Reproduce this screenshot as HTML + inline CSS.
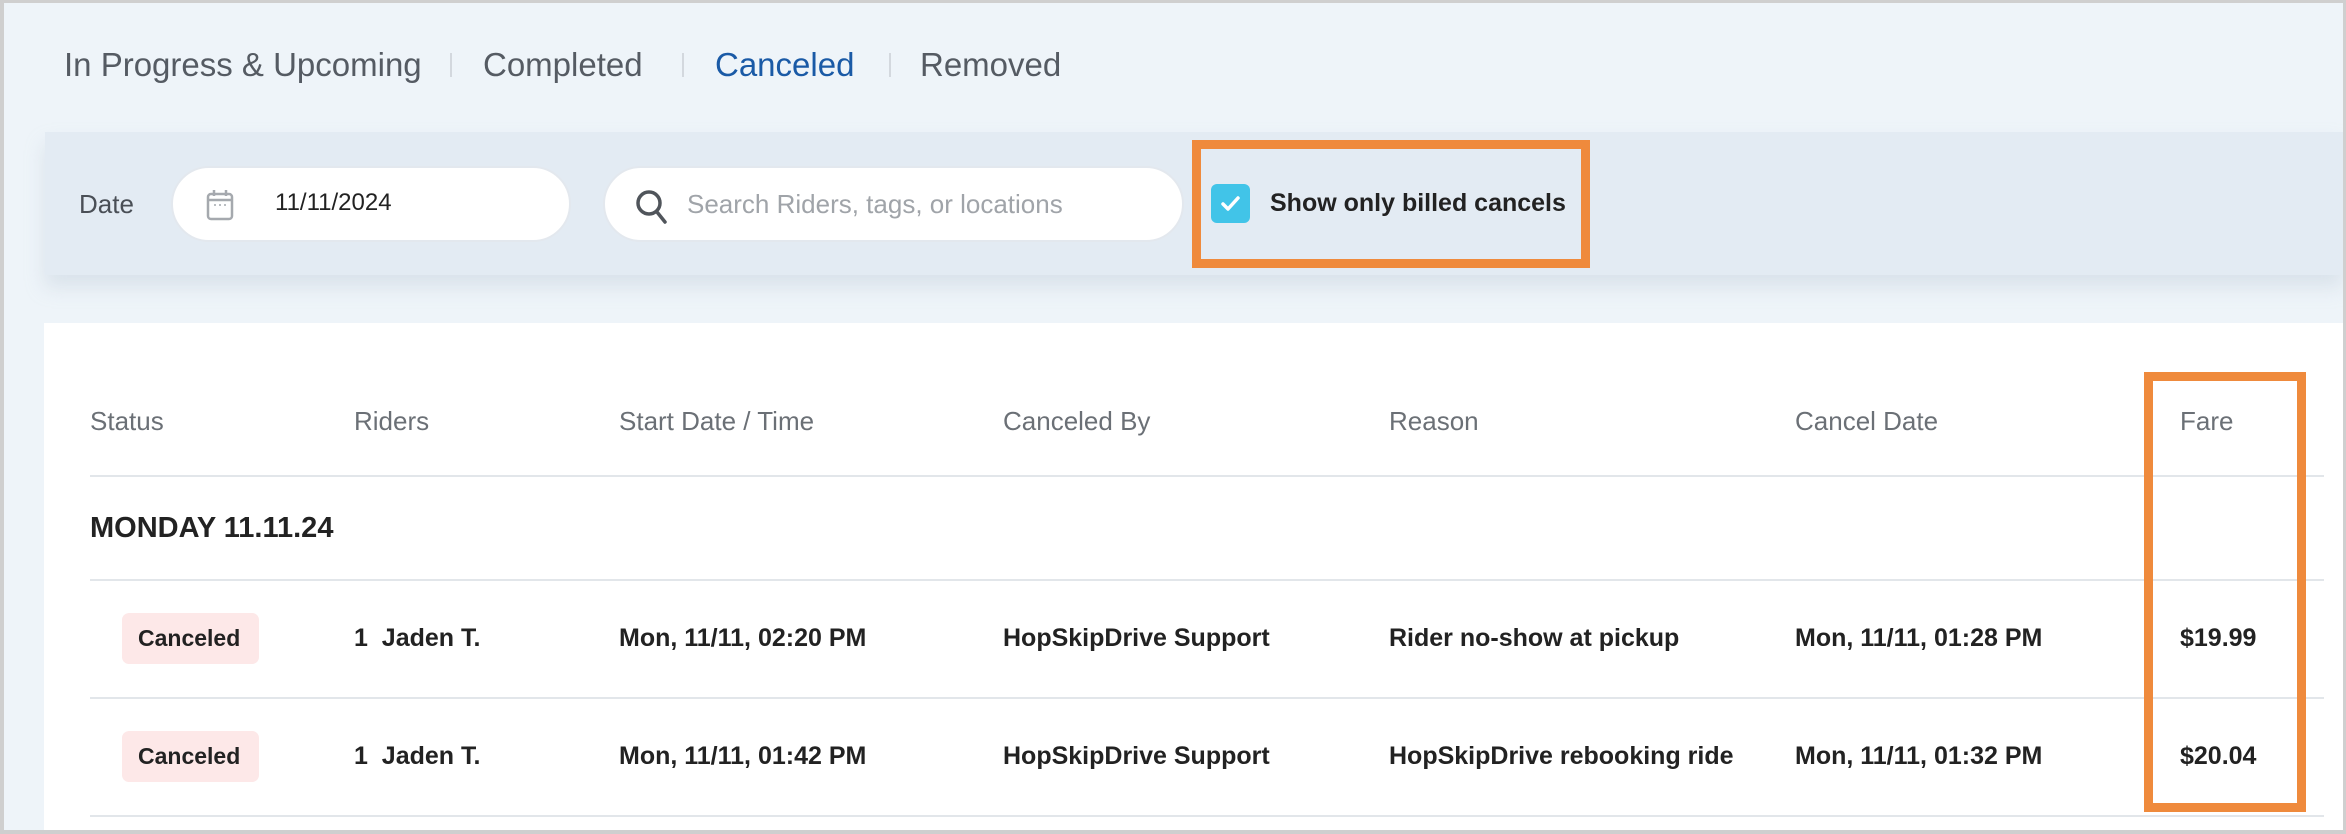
<!DOCTYPE html>
<html><head><meta charset="utf-8"><style>
*{margin:0;padding:0;box-sizing:border-box}
body{width:2346px;height:834px;overflow:hidden;background:#cfcfcf;font-family:"Liberation Sans",sans-serif;position:relative}
.page{position:absolute;left:4px;top:3px;right:3px;bottom:4px;background:#eef4f9;overflow:hidden}
.a{position:absolute;white-space:nowrap}
.tab{font-size:33px;color:#555b63;top:43px}
.sep{position:absolute;top:50px;width:2px;height:24px;background:#d3d8de}
.bar{position:absolute;left:41px;top:129px;right:0;height:143px;background:#e3ebf3;box-shadow:0 12px 18px rgba(180,195,210,.35)}
.inp{position:absolute;top:163px;height:76px;background:#fff;border:2px solid #e3e8ee;border-radius:38px}
.panel{position:absolute;left:40px;top:320px;right:0;bottom:0;background:#fff}
.hd{font-size:26px;color:#6b7076;top:403px}
.line{position:absolute;left:86px;width:2234px;height:2px;background:#e2e6ea}
.cell{font-size:25px;font-weight:bold;color:#222;}
.badge{position:absolute;left:118px;width:137px;height:51px;background:#fde8e8;border-radius:7px;font-size:23px;color:#222;font-weight:bold;line-height:51px;padding-left:16px}
.ob{position:absolute;border:9px solid #ef8a3c}
</style></head><body><div class="page">
<div class="a tab" style="left:60px">In Progress &amp; Upcoming</div>
<div class="sep" style="left:446px"></div>
<div class="a tab" style="left:479px">Completed</div>
<div class="sep" style="left:678px"></div>
<div class="a tab" style="left:711px;color:#1a5aa6">Canceled</div>
<div class="sep" style="left:885px"></div>
<div class="a tab" style="left:916px">Removed</div>

<div class="bar"></div>
<div class="a" style="left:75px;top:186px;font-size:26px;color:#4a4f56">Date</div>
<div class="inp" style="left:167px;width:400px"></div>
<svg class="a" style="left:202px;top:186px" width="28" height="32" viewBox="0 0 28 32"><rect x="2" y="5" width="24" height="25" rx="3" fill="none" stroke="#a5a9ae" stroke-width="2.5"/><line x1="2" y1="11" x2="26" y2="11" stroke="#a5a9ae" stroke-width="2.5"/><line x1="8" y1="1" x2="8" y2="7" stroke="#a5a9ae" stroke-width="2.5"/><line x1="20" y1="1" x2="20" y2="7" stroke="#a5a9ae" stroke-width="2.5"/><circle cx="9" cy="16" r="1" fill="#a5a9ae"/><circle cx="14" cy="16" r="1" fill="#a5a9ae"/><circle cx="19" cy="16" r="1" fill="#a5a9ae"/></svg>
<div class="a" style="left:271px;top:186px;font-size:24px;color:#222">11/11/2024</div>
<div class="inp" style="left:599px;width:581px"></div>
<svg class="a" style="left:630px;top:185px" width="36" height="38" viewBox="0 0 36 38"><circle cx="15" cy="15" r="11" fill="none" stroke="#50555b" stroke-width="3.5"/><line x1="23" y1="24" x2="31" y2="34" stroke="#50555b" stroke-width="3.5" stroke-linecap="round"/></svg>
<div class="a" style="left:683px;top:186px;font-size:26px;color:#a0a4a9">Search Riders, tags, or locations</div>
<div class="ob" style="left:1188px;top:137px;width:398px;height:128px"></div>
<div class="a" style="left:1207px;top:181px;width:39px;height:39px;background:#41c4e8;border-radius:6px"></div>
<svg class="a" style="left:1207px;top:181px" width="39" height="39" viewBox="0 0 39 39"><path d="M12 20 L17 25 L27 14" fill="none" stroke="#fff" stroke-width="3.5" stroke-linecap="round" stroke-linejoin="round"/></svg>
<div class="a" style="left:1266px;top:186px;font-size:25px;font-weight:bold;color:#222">Show only billed cancels</div>

<div class="panel"></div>
<div class="a hd" style="left:86px">Status</div>
<div class="a hd" style="left:350px">Riders</div>
<div class="a hd" style="left:615px">Start Date / Time</div>
<div class="a hd" style="left:999px">Canceled By</div>
<div class="a hd" style="left:1385px">Reason</div>
<div class="a hd" style="left:1791px">Cancel Date</div>
<div class="a hd" style="left:2176px">Fare</div>
<div class="line" style="top:472px"></div>
<div class="a" style="left:86px;top:509px;font-size:29px;color:#222;font-weight:bold">MONDAY 11.11.24</div>
<div class="line" style="top:576px"></div>
<div class="badge" style="top:610px">Canceled</div>
<div class="a cell" style="left:350px;top:621px">1&nbsp;&nbsp;Jaden T.</div>
<div class="a cell" style="left:615px;top:621px">Mon, 11/11, 02:20 PM</div>
<div class="a cell" style="left:999px;top:621px">HopSkipDrive Support</div>
<div class="a cell" style="left:1385px;top:621px">Rider no-show at pickup</div>
<div class="a cell" style="left:1791px;top:621px">Mon, 11/11, 01:28 PM</div>
<div class="a cell" style="left:2176px;top:621px">$19.99</div>
<div class="line" style="top:694px"></div>
<div class="badge" style="top:728px">Canceled</div>
<div class="a cell" style="left:350px;top:739px">1&nbsp;&nbsp;Jaden T.</div>
<div class="a cell" style="left:615px;top:739px">Mon, 11/11, 01:42 PM</div>
<div class="a cell" style="left:999px;top:739px">HopSkipDrive Support</div>
<div class="a cell" style="left:1385px;top:739px">HopSkipDrive rebooking ride</div>
<div class="a cell" style="left:1791px;top:739px">Mon, 11/11, 01:32 PM</div>
<div class="a cell" style="left:2176px;top:739px">$20.04</div>
<div class="line" style="top:812px"></div>
<div class="ob" style="left:2140px;top:369px;width:162px;height:440px"></div>
</div></body></html>
